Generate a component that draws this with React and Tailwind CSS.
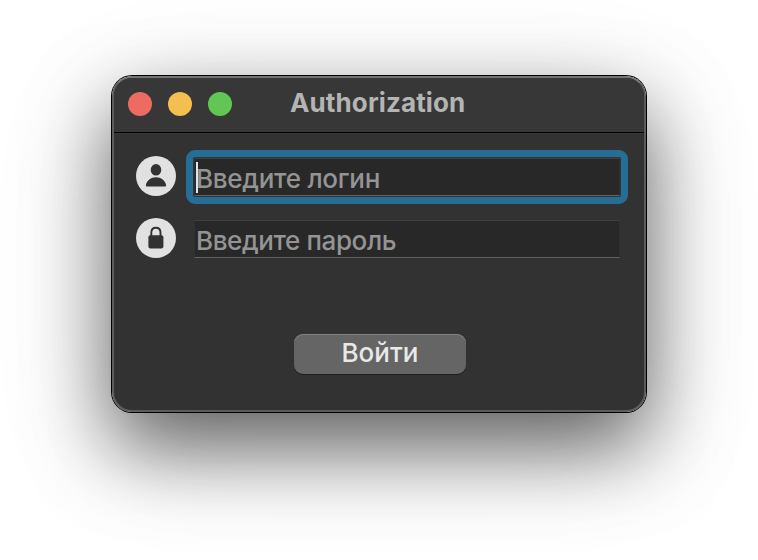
function UserIcon() {
  return (
    <svg className="h-10 w-10 shrink-0" viewBox="0 0 40 40">
      <circle cx="20" cy="20" r="20" fill="#e1e1e1" />
      <ellipse cx="20" cy="13.8" rx="5.3" ry="5.8" fill="#323232" />
      <path d="M11.200 30.600c-.9 0-1.500-.5-1.300-1.400.7-4.500 5-7.900 10.100-7.900s9.400 3.400 10.100 7.900c.2.900-.4 1.400-1.300 1.400z" fill="#323232" />
    </svg>
  );
}

function LockIcon() {
  return (
    <svg className="h-10 w-10 shrink-0" viewBox="0 0 40 40">
      <circle cx="20" cy="20" r="20" fill="#e1e1e1" />
      <rect x="12.400" y="17.200" width="15" height="13.200" rx="2" fill="#323232" />
      <path d="M15.300 19v-4.200c0-3 1.900-5 4.600-5s4.600 2 4.600 5V19" fill="none" stroke="#323232" strokeWidth="1.900" />
    </svg>
  );
}

function Field({ icon, placeholder, focused }) {
  return (
    <div className="flex items-start gap-[18px]">
      {icon}
      <div
        className={
          "relative mt-[2px] flex h-[38px] w-[426px] items-center border border-t-[#404040] border-x-[#303030] border-b-[#626262] bg-[#282828] " +
          (focused ? "rounded-[1px] shadow-[0_0_0_1px_#343434] outline-[7px] outline-offset-1 outline-[#266d98] outline-solid" : "")
        }
      >
        {focused && <span className="absolute top-[3px] left-px h-[31px] w-[2px] bg-[#e4e4e4]" />}
        <span
          className={
            "pt-[3px] pl-px text-[26px] leading-8 font-[450] whitespace-nowrap text-[#949494] " +
            (focused ? "tracking-[-0.28px]" : "tracking-[-0.4px]")
          }
        >
          {placeholder}
        </span>
      </div>
    </div>
  );
}

export default function App() {
  return (
    <div className="flex h-[560px] w-[758px] justify-center overflow-hidden bg-white pt-[76px] font-['Inter','Liberation_Sans',sans-serif]">
      <div className="h-[336px] w-[534px] rounded-[20px] shadow-[0_0_0_1px_#000,0_35px_80px_rgba(0,0,0,0.56),0_30px_120px_rgba(0,0,0,0.16)]">
        <div className="flex h-full flex-col overflow-hidden rounded-[20px] border-2 border-[#5c5c5c] border-t-[#747474] bg-[#323232]">
          <header className="flex h-[55px] shrink-0 items-start gap-4 border-b border-black bg-[#373737] pt-[14px] pl-[14px]">
            <span className="h-6 w-6 rounded-full bg-[#ed6b60]" />
            <span className="h-6 w-6 rounded-full bg-[#f5bf4f]" />
            <span className="h-6 w-6 rounded-full bg-[#62c655]" />
            <h1 className="-mt-[5px] ml-[42px] text-[26px] leading-8 font-bold tracking-[0.12px] text-[#b4b4b4]">Authorization</h1>
          </header>
          <form className="flex grow flex-col border-t border-[#383838] pt-[22px] pl-[22px]">
            <div className="flex flex-col gap-[22px]">
              <Field icon={<UserIcon />} placeholder="Введите логин" focused />
              <Field icon={<LockIcon />} placeholder="Введите пароль" />
            </div>
            <button
              type="button"
              className="mt-[76px] ml-[158px] flex h-10 w-[172px] items-center justify-center rounded-[9px] bg-[#656565] pb-[2px] text-[26px] leading-8 font-[450] text-[#e9e9e9] shadow-[inset_0_1px_0_#828282,0_1px_1px_rgba(0,0,0,0.4)]"
            >
              Войти
            </button>
          </form>
        </div>
      </div>
    </div>
  );
}
